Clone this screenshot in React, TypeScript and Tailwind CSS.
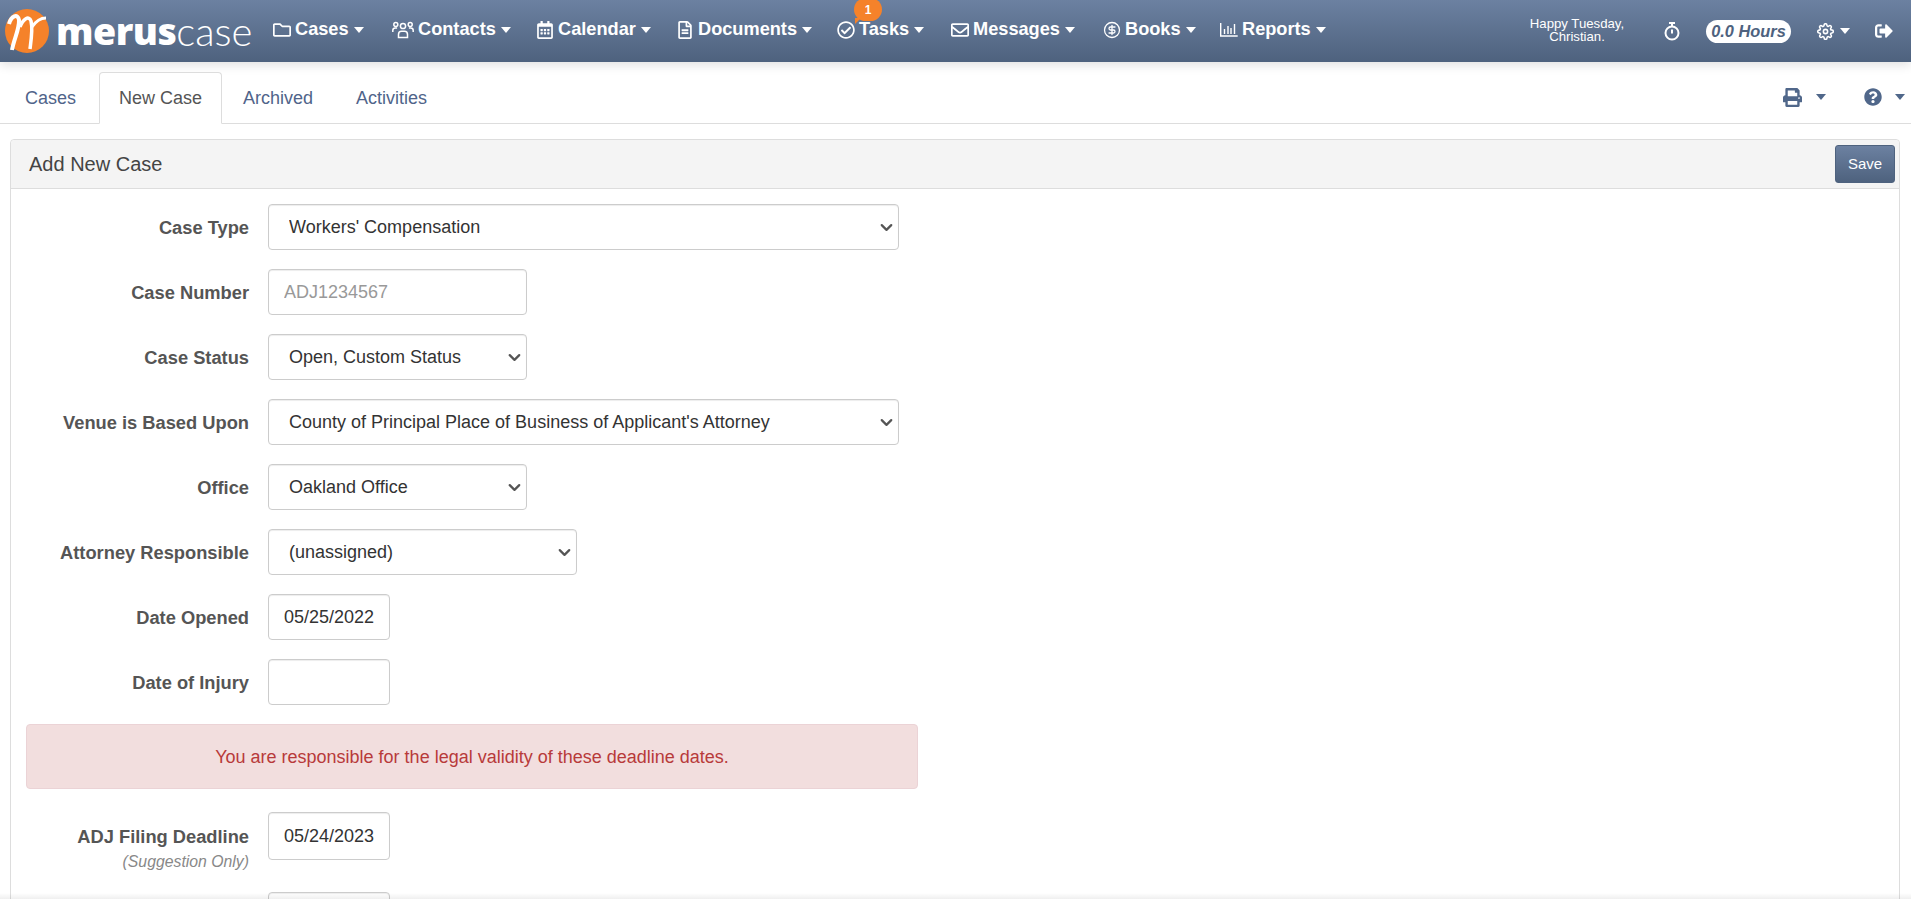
import React from "react";
import { CircleDollarSign, ChevronDown } from "lucide-react";
import { FaPrint, FaQuestionCircle, FaRegFolder, FaRegCalendarAlt, FaRegFileAlt, FaRegCheckCircle, FaRegEnvelope, FaSignOutAlt } from "react-icons/fa";
import { FiSettings } from "react-icons/fi";

const Caret = ({ c = "border-t-white" }: { c?: string }) => (
  <span className={`inline-block w-0 h-0 border-x-[5.500px] border-x-transparent border-t-[6px] ${c}`} />
);

const UsersIcon = () => (
  <svg width="22" height="18" viewBox="0 0 22 18" fill="none" stroke="white" strokeWidth="1.500">
    <circle cx="11" cy="5" r="2.600" />
    <circle cx="3.800" cy="3.500" r="2" />
    <circle cx="18.200" cy="3.500" r="2" />
    <path d="M6.500 16.500v-3c0-2 1.500-3.200 3-3.200h3c1.500 0 3 1.200 3 3.200v3z" />
    <path d="M.8 11v-1.500c0-1.500 1-2.500 2.500-2.500h1.800M21.200 11v-1.500c0-1.500-1-2.500-2.500-2.500h-1.800" />
  </svg>
);

const BarsIcon = () => (
  <svg width="18" height="15" viewBox="0 0 18 15" fill="none" stroke="white" strokeWidth="1.400">
    <path d="M.7 1v13h17" />
    <path d="M4.500 12V7M8 12V4M11 12V6M14.500 12V2" />
  </svg>
);

const StopwatchIcon = () => (
  <svg width="16" height="19" viewBox="0 0 16 19" fill="none" stroke="white" strokeWidth="2">
    <circle cx="8" cy="11" r="6.500" />
    <path d="M5 1h6M8 1v3M8 7.500v4" />
  </svg>
);

const nav: { label: string; icon: React.ReactNode; w: string }[] = [
  { label: "Cases", icon: <FaRegFolder size={18} />, w: "w-[119px]" },
  { label: "Contacts", icon: <UsersIcon />, w: "w-[144px]" },
  { label: "Calendar", icon: <FaRegCalendarAlt size={18} />, w: "w-[140px]" },
  { label: "Documents", icon: <FaRegFileAlt size={18} />, w: "w-[161px]" },
  { label: "Tasks", icon: <FaRegCheckCircle size={18} />, w: "w-[114px]" },
  { label: "Messages", icon: <FaRegEnvelope size={18} />, w: "w-[152px]" },
  { label: "Books", icon: <CircleDollarSign size={18} strokeWidth={1.700} />, w: "w-[117px]" },
  { label: "Reports", icon: <BarsIcon />, w: "w-[120px]" },
];

const Label = ({ children, sub }: { children: React.ReactNode; sub?: string }) => (
  <div className="w-[238px] shrink-0 text-right font-bold text-[#555] text-[18.300px] leading-[20px]">
    {children}
    {sub && <div className="text-[15.800px] italic font-normal text-[#888] mt-[6px] leading-[18px]">{sub}</div>}
  </div>
);

const fieldBox =
  "h-[46px] border border-[#ccc] rounded-[4px] bg-white text-[18px] text-[#333] shadow-[inset_0_1px_1px_rgba(0,0,0,0.075)]";

const Sel = ({ w, v }: { w: string; v: string }) => (
  <div className={`relative ${w}`}>
    <select className={`${fieldBox} w-full appearance-none pl-[20px] pr-1 outline-none`} defaultValue={v}>
      <option>{v}</option>
    </select>
    <ChevronDown size={19} strokeWidth={2.800} className="absolute right-[3px] top-[14px] text-[#555] pointer-events-none" />
  </div>
);

const Row = ({ label, sub, children }: { label: string; sub?: string; children: React.ReactNode }) => (
  <div className={`flex ${sub ? "items-start" : "items-center"} gap-[19px]`}>
    <div className={sub ? "pt-[15px]" : "pt-[1px]"}>
      <Label sub={sub}>{label}</Label>
    </div>
    {children}
  </div>
);

export default function App() {
  return (
    <div className="relative h-[899px] overflow-hidden bg-white font-['Liberation_Sans',Arial,sans-serif]">
      <header className="h-[62px] flex items-center text-white bg-gradient-to-b from-[#6c81a1] to-[#4e627e] shadow-[0_3px_10px_rgba(0,0,0,0.12)]">
        <div className="flex items-center w-[262px] shrink-0 pl-[5px]">
          <svg width="44" height="44" viewBox="0 0 44 44" className="shrink-0">
            <circle cx="22" cy="22" r="22" fill="#f5822a" />
            <path d="M4 15C6 7 13 4 14 11C14.500 20 9 30 7 41" fill="none" stroke="white" strokeWidth="4" />
            <path d="M15 18C18 10 24 6 26 12C28 20 26 32 25 40" fill="none" stroke="white" strokeWidth="3.500" />
            <path d="M27 18C31 12 36 9 41 9" fill="none" stroke="white" strokeWidth="3" />
          </svg>
          <span className="ml-[7px] text-[37.500px] leading-none tracking-[-0.500px] font-['Open_Sans',sans-serif] font-extrabold">merus</span>
          <span className="text-[40px] leading-none font-['Lato',sans-serif] font-light">case</span>
        </div>
        <nav className="flex items-center pl-[11px] pb-[2px]">
          {nav.map((n) => (
            <div key={n.label} className={`relative flex items-center gap-[5px] ${n.w} shrink-0`}>
              {n.icon}
              <span className="font-bold text-[18.200px] -ml-[1px]">{n.label}</span>
              <Caret />
              {n.label === "Tasks" && (
                <span className="absolute left-[17px] top-[-18px] w-[28px] h-[23px] rounded-full bg-[#f5822a] text-[12px] font-bold flex items-center justify-center">
                  1
                  <span className="absolute left-[1px] bottom-[-3px] w-0 h-0 border-r-[6px] border-r-transparent border-t-[6px] border-t-[#f5822a]" />
                </span>
              )}
            </div>
          ))}
        </nav>
        <div className="ml-auto flex items-center pr-[18px]">
          <div className="text-center text-[13.200px] leading-[13px] font-light w-[96px] -mt-[2px]">Happy Tuesday,<br />Christian.</div>
          <span className="ml-[39px] flex"><StopwatchIcon /></span>
          <div className="ml-[26px] w-[85px] h-[23px] rounded-full bg-white text-[#4e627e] text-[16.400px] font-bold italic flex items-center justify-center">0.0 Hours</div>
          <FiSettings size={17} className="ml-[26px]" strokeWidth={2.200} />
          <span className="ml-[6px] flex"><Caret /></span>
          <FaSignOutAlt size={18} className="ml-[25px]" />
        </div>
      </header>

      <div className="h-[62px] flex items-end border-b border-[#ddd] pl-[7px] text-[18px] text-[#50648a]">
        <div className="flex mb-[-1px] items-end">
          <div className="px-[18px] h-[52px] flex items-center">Cases</div>
          <div className="ml-[5px] w-[123px] h-[52px] flex items-center justify-center bg-white text-[#555] border border-[#ddd] border-b-white rounded-t-[4px]">New Case</div>
          <div className="ml-[21px] h-[52px] flex items-center">Archived</div>
          <div className="ml-[43px] h-[52px] flex items-center">Activities</div>
        </div>
        <div className="ml-auto h-[52px] flex items-center pr-[6px] text-[#50678a]">
          <FaPrint size={19} />
          <span className="ml-[14px] flex"><Caret c="border-t-[#50678a]" /></span>
          <FaQuestionCircle size={18} className="ml-[38px]" />
          <span className="ml-[13px] flex"><Caret c="border-t-[#50678a]" /></span>
        </div>
      </div>

      <div className="ml-[10px] mr-[11px] mt-[15px] border border-[#ddd] rounded-t-[4px] h-[800px]">
        <div className="h-[49px] bg-[#f4f4f4] border-b border-[#ddd] rounded-t-[4px] flex items-center justify-between pl-[18px] pr-[4px]">
          <span className="text-[20px] text-[#444]">Add New Case</span>
          <button className="w-[60px] h-[38px] rounded-[3px] text-[15px] text-white bg-gradient-to-b from-[#6c81a1] to-[#4e627e] border border-[#4e627e]">Save</button>
        </div>
        <div className="pt-[15px] flex flex-col gap-[19px] w-[908px]">
          <Row label="Case Type"><Sel w="w-[631px]" v="Workers' Compensation" /></Row>
          <Row label="Case Number"><input readOnly placeholder="ADJ1234567" className={`${fieldBox} w-[259px] px-[15px] outline-none placeholder:text-[#999]`} /></Row>
          <Row label="Case Status"><Sel w="w-[259px]" v="Open, Custom Status" /></Row>
          <Row label="Venue is Based Upon"><Sel w="w-[631px]" v="County of Principal Place of Business of Applicant's Attorney" /></Row>
          <Row label="Office"><Sel w="w-[259px]" v="Oakland Office" /></Row>
          <Row label="Attorney Responsible"><Sel w="w-[309px]" v="(unassigned)" /></Row>
          <Row label="Date Opened"><input readOnly value="05/25/2022" className={`${fieldBox} w-[122px] px-[15px] outline-none`} /></Row>
          <Row label="Date of Injury"><input readOnly className={`${fieldBox} w-[122px] px-[15px] outline-none`} /></Row>
          <div className="ml-[15px] w-[892px] h-[65px] pt-[2px] flex items-center justify-center bg-[#f2dede] border border-[#ebd3d6] rounded-[4px] text-[18px] text-[#b83a3a]">You are responsible for the legal validity of these deadline dates.</div>
          <div className="mt-[4px]">
            <Row label="ADJ Filing Deadline" sub="(Suggestion Only)"><input readOnly value="05/24/2023" className={`${fieldBox} h-[48px] w-[122px] px-[15px] outline-none`} /></Row>
          </div>
          <div className="mt-[2px]">
            <Row label=""><input readOnly className={`${fieldBox} w-[122px]`} /></Row>
          </div>
        </div>
      </div>
      <div className="absolute bottom-0 left-0 right-0 h-[6px] bg-gradient-to-b from-transparent to-[#00000010]" />
    </div>
  );
}
